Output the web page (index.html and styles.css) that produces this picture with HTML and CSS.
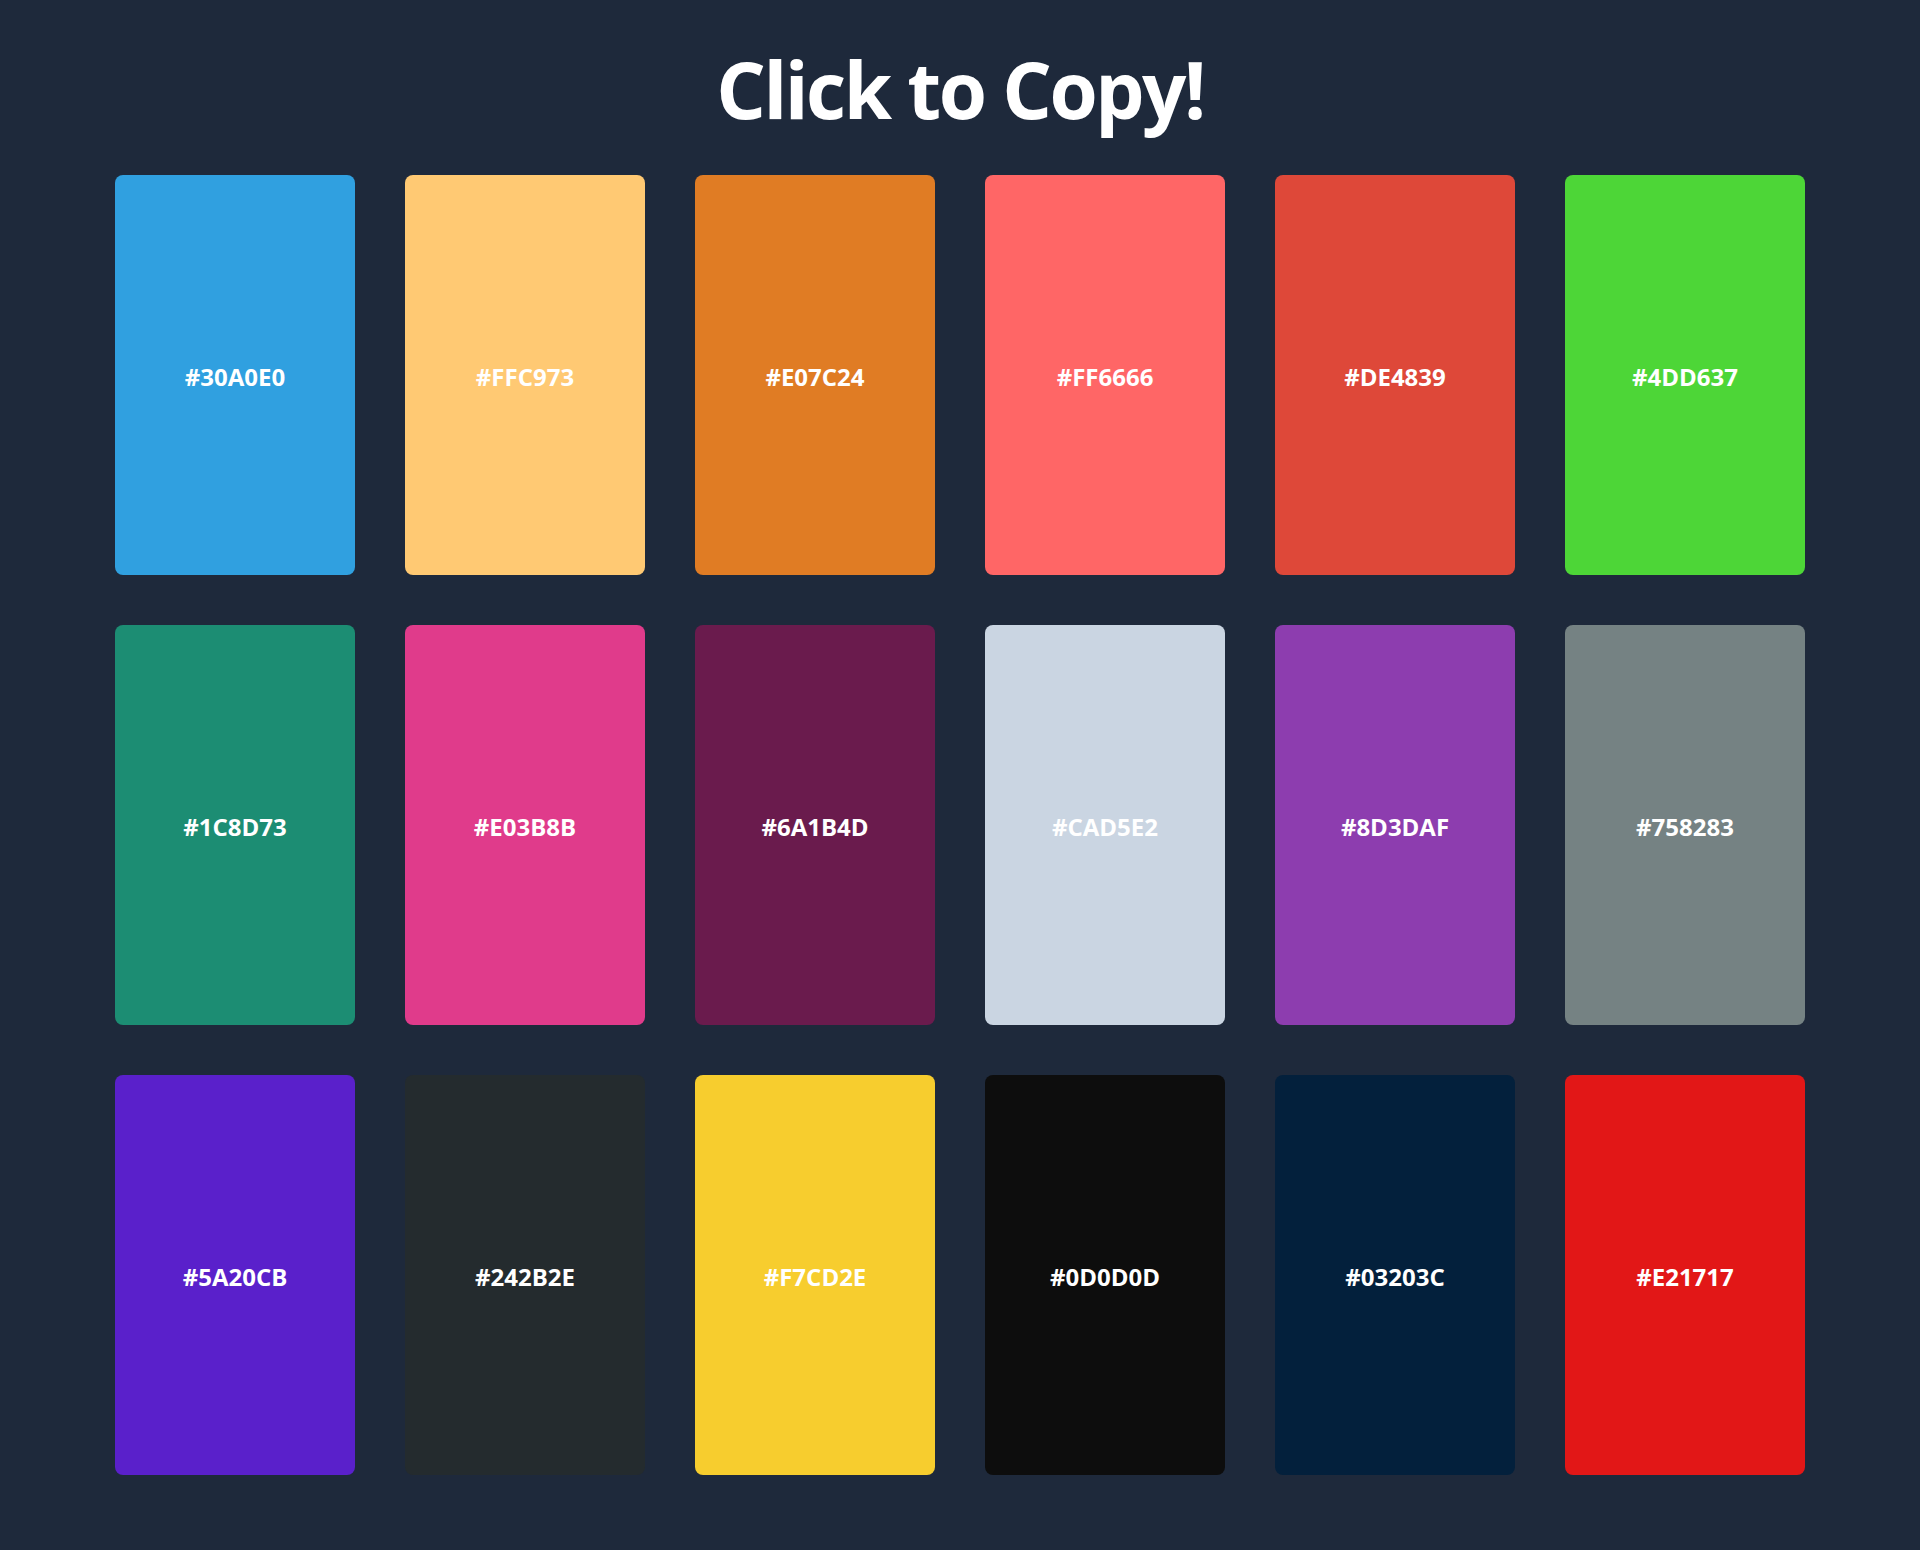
FILE: index.html
```html
<!DOCTYPE html>
<html lang="en">
<head>
<meta charset="utf-8">
<title>Click to Copy!</title>
<link rel="stylesheet" href="styles.css">
</head>
<body>
<main class="page">
  <h1 class="title">Click to Copy!</h1>
  <div class="grid">
    <div class="swatch c1"><span class="code">#30A0E0</span></div>
    <div class="swatch c2"><span class="code">#FFC973</span></div>
    <div class="swatch c3"><span class="code">#E07C24</span></div>
    <div class="swatch c4"><span class="code">#FF6666</span></div>
    <div class="swatch c5"><span class="code">#DE4839</span></div>
    <div class="swatch c6"><span class="code">#4DD637</span></div>
    <div class="swatch c7"><span class="code">#1C8D73</span></div>
    <div class="swatch c8"><span class="code">#E03B8B</span></div>
    <div class="swatch c9"><span class="code">#6A1B4D</span></div>
    <div class="swatch c10"><span class="code">#CAD5E2</span></div>
    <div class="swatch c11"><span class="code">#8D3DAF</span></div>
    <div class="swatch c12"><span class="code">#758283</span></div>
    <div class="swatch c13"><span class="code">#5A20CB</span></div>
    <div class="swatch c14"><span class="code">#242B2E</span></div>
    <div class="swatch c15"><span class="code">#F7CD2E</span></div>
    <div class="swatch c16"><span class="code">#0D0D0D</span></div>
    <div class="swatch c17"><span class="code">#03203C</span></div>
    <div class="swatch c18"><span class="code">#E21717</span></div>
  </div>
</main>
</body>
</html>
```

FILE: styles.css
```css
html, body {
  margin: 0;
  padding: 0;
  background: #1e293b;
}
body {
  font-family: "Open Sans", "Noto Sans", "DejaVu Sans", sans-serif;
  color: #ffffff;
  min-height: 1550px;
}
.page {
  display: flex;
  flex-direction: column;
  align-items: center;
}
.title {
  margin: 50px 0 0 0;
  height: 125px;
  font-size: 78px;
  line-height: 1;
  font-weight: 700;
  letter-spacing: -2.5px;
  text-align: center;
}
.grid {
  display: grid;
  grid-template-columns: repeat(6, 240px);
  grid-auto-rows: 400px;
  gap: 50px;
}
.swatch {
  border-radius: 8px;
  display: flex;
  align-items: center;
  justify-content: center;
  padding-top: 2px;
  box-sizing: border-box;
  cursor: pointer;
}
.code {
  font-size: 24px;
  font-weight: 700;
  letter-spacing: 0;
  color: #ffffff;
}
.c1 { background: #30a0e0; }
.c2 { background: #ffc973; }
.c3 { background: #e07c24; }
.c4 { background: #ff6666; }
.c5 { background: #de4839; }
.c6 { background: #4dd637; }
.c7 { background: #1c8d73; }
.c8 { background: #e03b8b; }
.c9 { background: #6a1b4d; }
.c10 { background: #cad5e2; }
.c11 { background: #8d3daf; }
.c12 { background: #758283; }
.c13 { background: #5a20cb; }
.c14 { background: #242b2e; }
.c15 { background: #f7cd2e; }
.c16 { background: #0d0d0d; }
.c17 { background: #03203c; }
.c18 { background: #e21717; }
```
